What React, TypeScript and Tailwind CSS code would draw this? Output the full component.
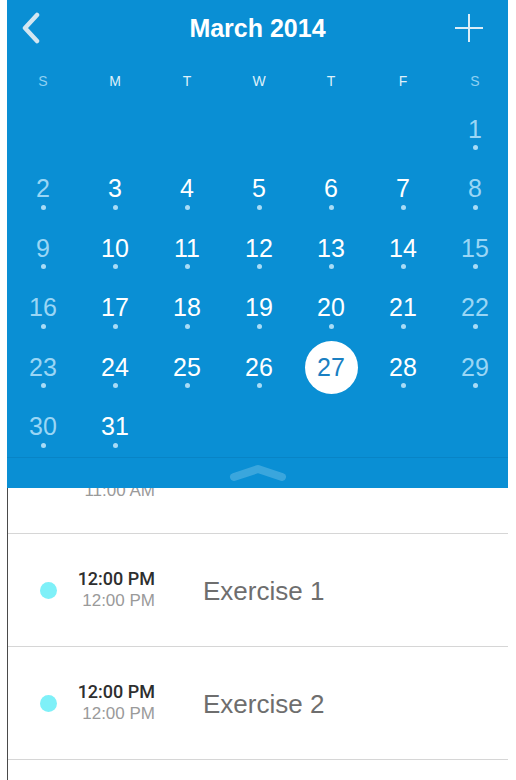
const days: (number | null)[] = [
  null, null, null, null, null, null, 1,
  2, 3, 4, 5, 6, 7, 8,
  9, 10, 11, 12, 13, 14, 15,
  16, 17, 18, 19, 20, 21, 22,
  23, 24, 25, 26, 27, 28, 29,
  30, 31, null, null, null, null, null,
]

const weekdays = ['S', 'M', 'T', 'W', 'T', 'F', 'S']

const events = [
  { start: '12:00 PM', end: '12:00 PM', title: 'Exercise 1' },
  { start: '12:00 PM', end: '12:00 PM', title: 'Exercise 2' },
]

const DayCell = ({ day, index }: { day: number | null; index: number }) => {
  if (day === null) return <div className="h-[59.5px]" />
  const weekend = index % 7 === 0 || index % 7 === 6
  const selected = day === 27
  return (
    <div className="h-[59.5px] flex flex-col items-center pt-[16px]">
      <div className="h-[30px] flex items-center justify-center">
        {selected ? (
          <span className="w-[53px] h-[53px] shrink-0 rounded-full bg-white text-[#1a80c2] flex items-center justify-center">
            {day}
          </span>
        ) : (
          <span className={weekend ? 'text-[#9ad6f5]' : 'text-white'}>{day}</span>
        )}
      </div>
      {!selected && <span className="mt-[1px] w-[5px] h-[5px] rounded-full bg-[#a8dcf6]" />}
    </div>
  )
}

const App = () => {
  return (
    <div className="w-[516px] h-[780px] bg-white overflow-hidden" style={{ fontFamily: '"Liberation Sans", Arial, sans-serif' }}>
      <div className="ml-[7px] w-[501px] h-full border-l border-[#4a4a4a]">
        {/* calendar */}
        <div className="bg-[#0a8fd4] h-[488px] -ml-px overflow-hidden">
          <div className="h-[56px] grid grid-cols-[1fr_auto_1fr] items-center">
            <div className="pl-[14px]">
              <svg width="20" height="32" viewBox="0 0 20 32">
                <path d="M16 3 L4 16 L16 29" fill="none" stroke="#d3e6f1" strokeWidth="4.5" strokeLinecap="round" strokeLinejoin="round" />
              </svg>
            </div>
            <h1 className="text-white text-[25px] font-bold leading-none">March 2014</h1>
            <div className="flex justify-end pr-[25px]">
              <svg width="28" height="28" viewBox="0 0 28 28">
                <path d="M14 0 V28 M0 14 H28" stroke="#dcedf7" strokeWidth="2" />
              </svg>
            </div>
          </div>

          <div className="grid grid-cols-[repeat(7,72px)] h-[42px] pt-[14px]">
            {weekdays.map((d, i) => (
              <span
                key={i}
                className={`text-center text-[14px] leading-[22px] ${i === 0 || i === 6 ? 'text-[#8fd0f2]' : 'text-[#dff0fa]'}`}
              >
                {d}
              </span>
            ))}
          </div>

          <div className="grid grid-cols-[repeat(7,72px)] text-[25px] leading-none">
            {days.map((d, i) => (
              <DayCell key={i} day={d} index={i} />
            ))}
          </div>

          <div className="mt-[2px] border-t border-[#0884c6] h-[31px] flex items-center justify-center">
            <svg width="60" height="20" viewBox="0 0 60 20">
              <path d="M6 14 L30 6 L54 14" fill="none" stroke="#3aa6dd" strokeWidth="8" strokeLinecap="round" strokeLinejoin="round" />
            </svg>
          </div>
        </div>

        {/* agenda */}
        <div className="h-[45px] overflow-hidden">
          <div className="-mt-[8px] w-[147px] text-right text-[17px] leading-[22px] text-[#9a9a9a]">11:00 AM</div>
        </div>
        <div className="border-t border-[#d6d6d6]">
          {events.map((e, i) => (
            <div key={i} className="h-[113px] border-b border-[#d6d6d6] flex items-center pl-[32px]">
              <span className="w-[17px] h-[17px] rounded-full bg-[#7ef0f8] shrink-0" />
              <div className="w-[98px] text-right text-[17px] leading-[22px]">
                <div className="font-medium text-[18px] text-[#2e2e2e]" style={{ fontFamily: 'Roboto, "Liberation Sans", sans-serif' }}>{e.start}</div>
                <div className="text-[#9a9a9a]">{e.end}</div>
              </div>
              <span className="ml-[48px] mt-[3px] text-[26px] text-[#6e6e6e]">{e.title}</span>
            </div>
          ))}
        </div>
      </div>
    </div>
  )
}

export default App
